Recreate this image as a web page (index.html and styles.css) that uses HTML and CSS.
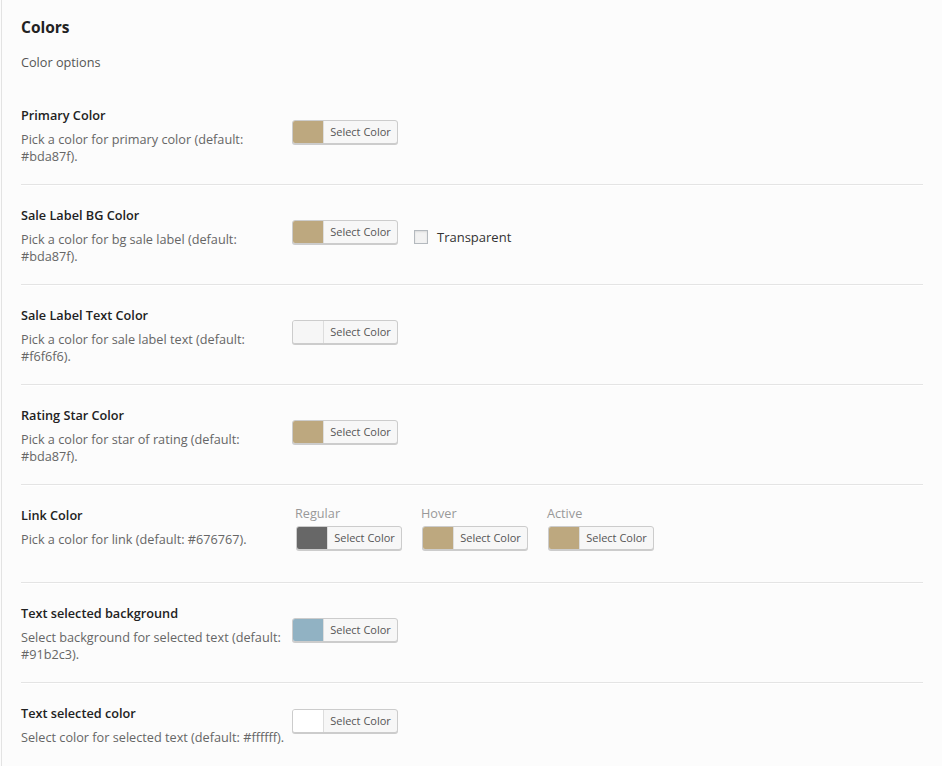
FILE: index.html
```html
<!DOCTYPE html>
<html>
<head>
<meta charset="utf-8">
<link rel="stylesheet" href="styles.css">
</head>
<body>
<div class="panel">
  <h2 class="section-title">Colors</h2>
  <p class="section-desc">Color options</p>

  <div class="row">
    <div class="label-col">
      <div class="opt-title">Primary Color</div>
      <div class="opt-desc">Pick a color for primary color (default:<br>#bda87f).</div>
    </div>
    <div class="ctrl-col">
      <button class="picker"><span class="swatch" style="background:#bda87f"></span><span class="picker-text">Select Color</span></button>
    </div>
  </div>

  <div class="row">
    <div class="label-col">
      <div class="opt-title">Sale Label BG Color</div>
      <div class="opt-desc">Pick a color for bg sale label (default:<br>#bda87f).</div>
    </div>
    <div class="ctrl-col ctrl-inline">
      <button class="picker"><span class="swatch" style="background:#bda87f"></span><span class="picker-text">Select Color</span></button>
      <label class="check"><span class="box"></span>Transparent</label>
    </div>
  </div>

  <div class="row">
    <div class="label-col">
      <div class="opt-title">Sale Label Text Color</div>
      <div class="opt-desc">Pick a color for sale label text (default:<br>#f6f6f6).</div>
    </div>
    <div class="ctrl-col">
      <button class="picker"><span class="swatch" style="background:#f6f6f6"></span><span class="picker-text">Select Color</span></button>
    </div>
  </div>

  <div class="row">
    <div class="label-col">
      <div class="opt-title">Rating Star Color</div>
      <div class="opt-desc">Pick a color for star of rating (default:<br>#bda87f).</div>
    </div>
    <div class="ctrl-col">
      <button class="picker"><span class="swatch" style="background:#bda87f"></span><span class="picker-text">Select Color</span></button>
    </div>
  </div>

  <div class="row row-link">
    <div class="label-col">
      <div class="opt-title">Link Color</div>
      <div class="opt-desc">Pick a color for link (default: #676767).</div>
    </div>
    <div class="ctrl-col link-group">
      <div class="link-item">
        <div class="link-label">Regular</div>
        <button class="picker"><span class="swatch" style="background:#676767"></span><span class="picker-text">Select Color</span></button>
      </div>
      <div class="link-item">
        <div class="link-label">Hover</div>
        <button class="picker"><span class="swatch" style="background:#bda87f"></span><span class="picker-text">Select Color</span></button>
      </div>
      <div class="link-item">
        <div class="link-label">Active</div>
        <button class="picker"><span class="swatch" style="background:#bda87f"></span><span class="picker-text">Select Color</span></button>
      </div>
    </div>
  </div>

  <div class="row">
    <div class="label-col">
      <div class="opt-title">Text selected background</div>
      <div class="opt-desc">Select background for selected text (default:<br>#91b2c3).</div>
    </div>
    <div class="ctrl-col">
      <button class="picker"><span class="swatch" style="background:#91b2c3"></span><span class="picker-text">Select Color</span></button>
    </div>
  </div>

  <div class="row row-last">
    <div class="label-col">
      <div class="opt-title">Text selected color</div>
      <div class="opt-desc">Select color for selected text (default: #ffffff).</div>
    </div>
    <div class="ctrl-col">
      <button class="picker"><span class="swatch" style="background:#ffffff"></span><span class="picker-text">Select Color</span></button>
    </div>
  </div>
</div>
</body>
</html>
```
FILE: styles.css
```css
html, body {
  margin: 0;
  padding: 0;
  background: #fcfcfc;
}
body {
  font-family: "Open Sans", "Noto Sans", sans-serif;
  font-size: 12.7px;
  color: #555;
  padding-left: 1px;
}
.panel {
  border-left: 1px solid #e3e3e3;
  min-height: 766px;
  padding: 0 19px 0 19px;
}
.section-title {
  margin: 0;
  padding-top: 16px;
  font-size: 15.5px;
  line-height: 22px;
  font-weight: 700;
  color: #222;
}
.section-desc {
  margin: 14px 0 0;
  line-height: 20px;
  color: #555;
}
.row {
  display: flex;
  height: 99px;
  border-bottom: 1px solid #e4e4e4;
  box-shadow: 0 1px 0 #fff;
}
.section-desc + .row {
  margin-top: 13px;
}
.label-col {
  width: 271px;
  flex: none;
  padding-top: 21px;
  white-space: nowrap;
}
.opt-title {
  font-weight: 600;
  color: #222;
  font-size: 12.7px;
  line-height: 18px;
}
.opt-desc {
  margin-top: 7px;
  line-height: 17px;
  color: #666;
}
.ctrl-col {
  padding-top: 35px;
}
.ctrl-inline {
  display: flex;
  align-items: flex-start;
}
.picker {
  display: flex;
  align-items: stretch;
  height: 24px;
  width: 106px;
  padding: 0;
  margin: 0;
  border: 1px solid #ccc;
  border-radius: 3px;
  background: #f7f7f7;
  box-shadow: 0 1px 0 #ccc;
  overflow: hidden;
  font-family: "Open Sans", "Noto Sans", sans-serif;
  cursor: pointer;
}
.swatch {
  width: 30px;
  flex: none;
  border-right: 1px solid #ddd;
}
.picker-text {
  flex: 1;
  font-size: 11px;
  color: #555;
  line-height: 22px;
  text-align: center;
}
.check {
  display: flex;
  align-items: center;
  margin-left: 16px;
  margin-top: 10px;
  font-size: 13px;
  color: #333;
  line-height: 14px;
}
.box {
  width: 12px;
  height: 12px;
  border: 1px solid #b4b9be;
  background: #f2f2f2;
  box-shadow: inset 0 1px 2px rgba(0,0,0,0.1);
  margin-right: 9px;
}
.row-link {
  height: 97px;
}
.link-group {
  display: flex;
  padding-top: 20px;
  padding-left: 3px;
}
.link-item {
  width: 126px;
}
.link-label {
  color: #999;
  line-height: 17px;
  margin-bottom: 4px;
}
.link-item .picker {
  margin-left: 1px;
}
.row-last {
  border-bottom: none;
  box-shadow: none;
}
.row-last .ctrl-col {
  padding-top: 26px;
}
```
